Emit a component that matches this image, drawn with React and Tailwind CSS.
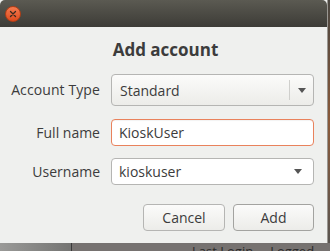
export default function App() {
  return (
    <div className="w-[330px] h-[251px] overflow-hidden flex flex-col bg-[#6e6a68] font-['Open_Sans',sans-serif]">
      <div className="flex h-[243px]">
        <div className="w-[328px] h-[243px] flex flex-col bg-[#eff0ee] border-r border-[#9a9893]">
          {/* titlebar */}
          <div className="h-[27px] shrink-0 bg-gradient-to-b from-[#5b5a52] to-[#3d3c37] flex items-center pl-[5px] rounded-t-[5px]">
            <div className="w-[16px] h-[16px] rounded-full bg-gradient-to-b from-[#f47a4e] to-[#dc4a1c] border border-[#b23d15] flex items-center justify-center">
              <svg width="8" height="8" viewBox="0 0 8 8">
                <path d="M1.5 1.5 L6.5 6.5 M6.5 1.5 L1.5 6.5" stroke="#3a2a20" strokeWidth="1.3" strokeLinecap="round" />
              </svg>
            </div>
          </div>
          <div className="flex flex-col px-[10px]">
            <div className="text-center text-[17px] font-bold text-[#3c3c3c] mt-[12px] leading-[22px] pl-[4px]">Add account</div>
            <div className="grid grid-cols-[90px_1fr] gap-x-[11px] mt-[13px] items-center text-[14px] text-[#3c3c3c]">
              <div className="text-right leading-[18px] tracking-[0.1px] -ml-[2px]">Account Type</div>
              <div className="h-[32px] mr-[3px] rounded-[4px] border border-[#b5b5b3] bg-gradient-to-b from-[#fbfbfa] to-[#ecece9] flex items-center">
                <span className="flex-1 pl-[8px]">Standard</span>
                <div className="w-px h-[20px] bg-[#cfcfcc]" />
                <div className="w-[23px] flex justify-center">
                  <svg width="8" height="5" viewBox="0 0 8 5"><path d="M0 0 L8 0 L4 5 Z" fill="#555" /></svg>
                </div>
              </div>
              <div className="text-right leading-[18px] mt-[13px]">Full name</div>
              <div className="h-[27px] mt-[13px] mr-[3px] rounded-[4px] border border-[#e9825c] bg-white flex items-center pl-[7px] shadow-[inset_0_1px_1px_rgba(0,0,0,0.05)]">
                <span>KioskUser</span>
              </div>
              <div className="text-right leading-[18px] mt-[12px]">Username</div>
              <div className="h-[27px] mt-[12px] mr-[3px] rounded-[4px] border border-[#b5b5b3] bg-white flex items-center">
                <span className="flex-1 pl-[7px]">kioskuser</span>
                <div className="w-[30px] flex justify-center">
                  <svg width="8" height="5" viewBox="0 0 8 5"><path d="M0 0 L8 0 L4 5 Z" fill="#555" /></svg>
                </div>
              </div>
            </div>
            <div className="flex justify-end gap-[8px] mt-[19px] mr-[3px] text-[14px] text-[#3c3c3c]">
              <div className="w-[82px] h-[27px] rounded-[4px] border border-[#b5b5b3] bg-gradient-to-b from-[#fbfbfa] to-[#ecece9] flex items-center justify-center">Cancel</div>
              <div className="w-[81px] h-[27px] rounded-[4px] border border-[#a3a3a0] bg-gradient-to-b from-[#fbfbfa] to-[#ecece9] flex items-center justify-center">Add</div>
            </div>
          </div>
        </div>
        <div className="flex-1 bg-gradient-to-b from-[#4a4640] via-[#8a5a3a] to-[#5a5550]" />
      </div>
      <div className="h-[8px] flex">
        <div className="w-[72px] bg-gradient-to-r from-[#9a9a98] to-[#747472] border-r border-[#3a3a3a]" />
        <div className="flex-1 bg-[#767270] relative overflow-hidden">
          <div className="absolute left-[120px] top-[1px] text-[13px] leading-[15px] text-[#2b2b2b] whitespace-nowrap flex gap-[17px]">
            <span>Last Login</span>
            <span>Logged</span>
          </div>
        </div>
      </div>
    </div>
  );
}
